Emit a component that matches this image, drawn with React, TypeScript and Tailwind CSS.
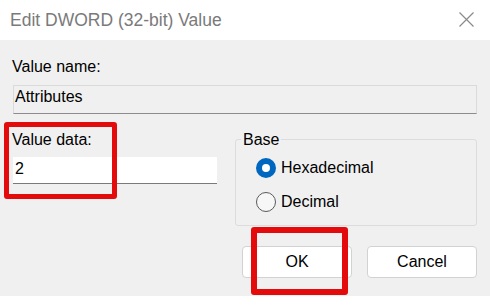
export default function App() {
  return (
    <div className="relative w-[490px] h-[296px] overflow-hidden bg-[#f0f0f0] font-['Liberation_Sans',Arial,sans-serif] text-[16px] text-black">
      <div className="flex h-[40px] items-center justify-between bg-white pl-[10px] pr-[16px]">
        <span className="text-[17.5px] leading-[20px] text-[#7a7a7a]">Edit DWORD (32-bit) Value</span>
        <svg width="15" height="15" viewBox="0 0 15 15" className="mt-[-2px]">
          <path d="M0.5 0.5 L14.5 14.5 M14.5 0.5 L0.5 14.5" stroke="#8a8a8a" strokeWidth="1.2" fill="none" />
        </svg>
      </div>

      <div className="pl-[12px] pr-[13px] pt-[18px]">
        <p className="leading-[18px]">Value name:</p>
        <div className="ml-[1px] mt-[9px] h-[29px] border border-[#dadada] border-b-[#8c8c8c] pl-[1px] pt-[2px] leading-[18px]">
          Attributes
        </div>

        <div className="mt-[17px] flex">
          <div className="w-[205px]">
            <p className="leading-[18px]">Value data:</p>
            <div className="ml-[1px] mt-[8px] h-[27px] border-b border-[#7a7a7a] bg-white pl-[2px] pt-[3px] leading-[18px]">
              2
            </div>
          </div>

          <div className="relative ml-[18px] mt-[8px] h-[87px] flex-1 rounded-[3px] border border-[#dcdcdc]">
            <span className="absolute left-[5px] top-[-9px] bg-[#f0f0f0] px-[2px] leading-[18px]">Base</span>
            <div className="flex flex-col gap-[14px] pl-[20px] pt-[18px]">
              <div className="flex items-center gap-[5px]">
                <span className="flex h-[20px] w-[20px] items-center justify-center rounded-full bg-[#0067c0]">
                  <span className="h-[8px] w-[8px] rounded-full bg-white" />
                </span>
                <span className="leading-[18px]">Hexadecimal</span>
              </div>
              <div className="flex items-center gap-[5px]">
                <span className="h-[20px] w-[20px] rounded-full border border-[#5a5a5a] bg-[#f7f7f7]" />
                <span className="leading-[18px]">Decimal</span>
              </div>
            </div>
          </div>
        </div>

        <div className="mt-[20px] flex justify-end gap-[15px]">
          <button className="h-[32px] w-[110px] rounded-[4px] border border-[#d2d2d2] bg-white leading-[18px]">OK</button>
          <button className="h-[32px] w-[110px] rounded-[4px] border border-[#d2d2d2] bg-white leading-[18px]">Cancel</button>
        </div>
      </div>

      <div className="absolute left-[4px] top-[122px] h-[77px] w-[113px] rounded-[3px] border-[5px] border-[#e30b0b]" />
      <div className="absolute left-[251px] top-[227px] h-[68px] w-[97px] rounded-[3px] border-[6px] border-[#e30b0b]" />
    </div>
  );
}
